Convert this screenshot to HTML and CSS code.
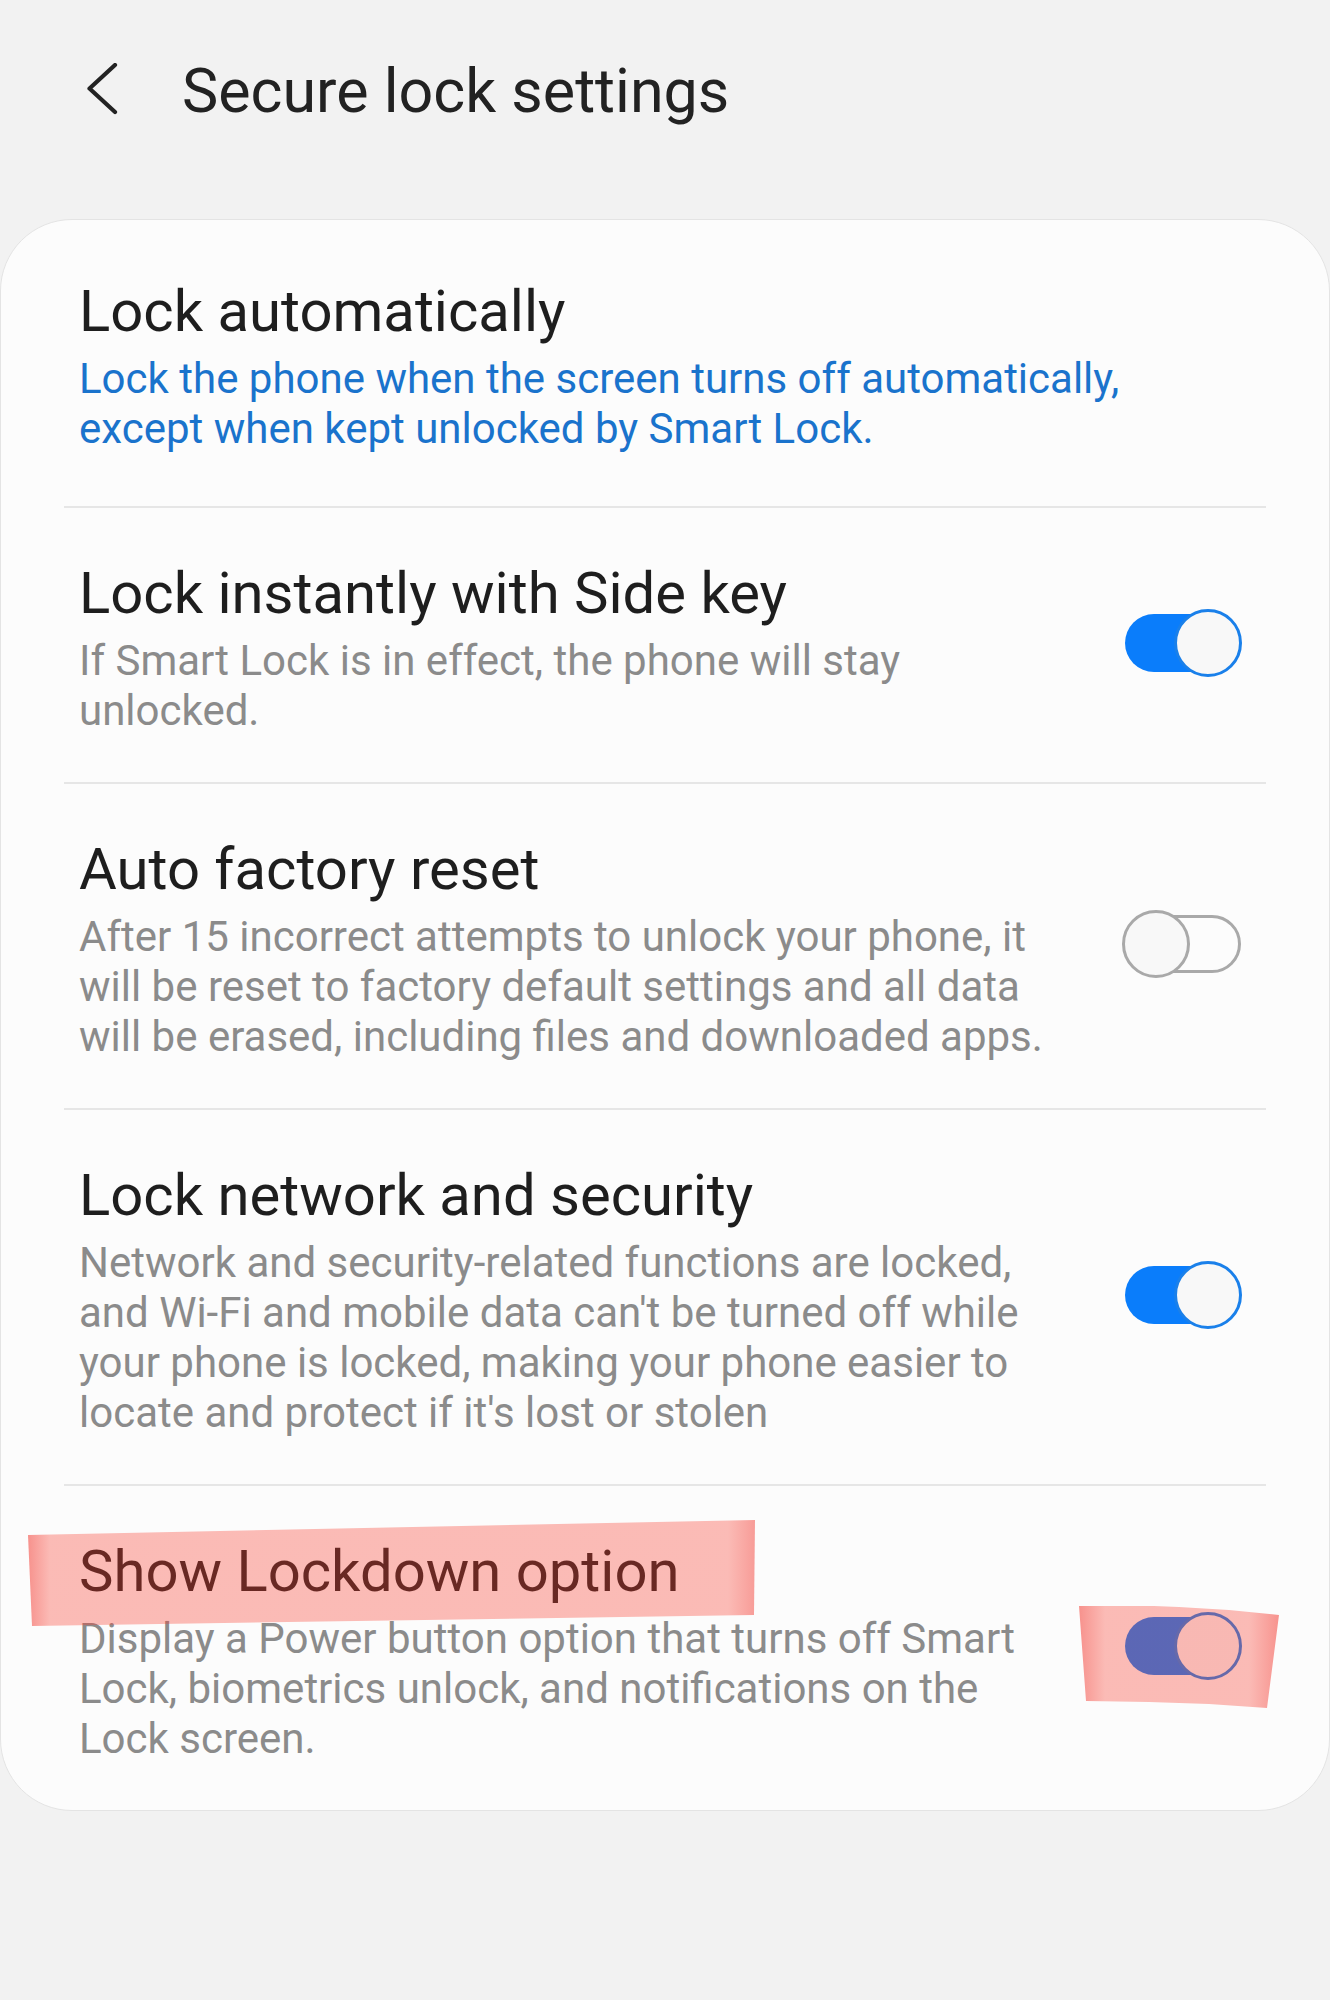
FILE: index.html
```html
<!DOCTYPE html>
<html lang="en">
<head>
<meta charset="utf-8">
<title>Secure lock settings</title>
<link rel="stylesheet" href="styles.css">
</head>
<body>
<div class="page">
  <header class="header">
    <svg class="back" viewBox="0 0 32 52" width="32" height="52" aria-hidden="true">
      <path d="M28 2 L2.5 25.5 L28 49" fill="none" stroke="#232323" stroke-width="4.2" stroke-linecap="round" stroke-linejoin="round"/>
    </svg>
    <h1 class="title">Secure lock settings</h1>
  </header>

  <section class="card">
    <div class="row row-first">
      <div class="text">
        <div class="item-title">Lock automatically</div>
        <div class="item-sub blue">Lock the phone when the screen turns off automatically, except when kept unlocked by Smart Lock.</div>
      </div>
    </div>
    <div class="divider"></div>
    <div class="row">
      <div class="text">
        <div class="item-title">Lock instantly with Side key</div>
        <div class="item-sub">If Smart Lock is in effect, the phone will stay unlocked.</div>
      </div>
      <div class="toggle on"><span class="track"></span><span class="knob"></span></div>
    </div>
    <div class="divider"></div>
    <div class="row">
      <div class="text">
        <div class="item-title">Auto factory reset</div>
        <div class="item-sub">After 15 incorrect attempts to unlock your phone, it will be reset to factory default settings and all data will be erased, including files and downloaded apps.</div>
      </div>
      <div class="toggle off"><span class="track"></span><span class="knob"></span></div>
    </div>
    <div class="divider"></div>
    <div class="row">
      <div class="text">
        <div class="item-title">Lock network and security</div>
        <div class="item-sub">Network and security-related functions are locked, and Wi-Fi and mobile data can't be turned off while your phone is locked, making your phone easier to locate and protect if it's lost or stolen</div>
      </div>
      <div class="toggle on"><span class="track"></span><span class="knob"></span></div>
    </div>
    <div class="divider"></div>
    <div class="row row-last">
      <div class="text">
        <div class="item-title">Show Lockdown option</div>
        <div class="item-sub">Display a Power button option that turns off Smart Lock, biometrics unlock, and notifications on the Lock screen.</div>
      </div>
      <div class="toggle on"><span class="track"></span><span class="knob"></span></div>
    </div>
  </section>

  <div class="mark mark-title"></div>
  <div class="mark mark-toggle"></div>
</div>
</body>
</html>
```

FILE: styles.css
```css
html, body {
  margin: 0;
  padding: 0;
  background: #f2f2f2;
}

body {
  font-family: Roboto, "Noto Sans", "Liberation Sans", sans-serif;
  color: #1e1e1e;
  min-height: 2000px;
}

.page {
  position: relative;
  width: 1330px;
  min-height: 2000px;
}

.header {
  display: flex;
  align-items: flex-start;
  padding: 55px 0 0 87px;
  height: 72px;
}

.back {
  display: block;
  margin-top: 8px;
  flex: none;
}

.title {
  margin: 0 0 0 63px;
  font-size: 61px;
  line-height: 72px;
  font-weight: 400;
  color: #222;
}

.card {
  margin: 92px 0 0 0;
  background: #fcfcfc;
  border: 1px solid #e4e4e4;
  border-radius: 72px;
  overflow: hidden;
}

.row {
  display: flex;
  align-items: center;
  gap: 62px;
  padding: 51px 85px 46px 78px;
}

.row-first {
  padding-top: 57px;
  padding-bottom: 52px;
}

.row-last {
  padding-bottom: 46px;
}

.text {
  flex: 1;
  min-width: 0;
}

.item-title {
  font-size: 58px;
  line-height: 68px;
  color: #1e1e1e;
}

.item-sub {
  margin-top: 9px;
  font-size: 42px;
  line-height: 50px;
  color: #8b8b8b;
}

.item-sub.blue {
  color: #1a73cc;
}

.divider {
  height: 2px;
  margin: 0 63px;
  background: #e6e6e6;
}

.toggle {
  position: relative;
  flex: none;
  width: 122px;
  height: 70px;
  margin-bottom: 10px;
}

.toggle .track {
  position: absolute;
  left: 3px;
  top: 6px;
  width: 116px;
  height: 58px;
  border-radius: 29px;
  box-sizing: border-box;
}

.toggle .knob {
  position: absolute;
  top: 1px;
  width: 68px;
  height: 68px;
  border-radius: 50%;
  box-sizing: border-box;
  background: #f8f8f8;
}

.toggle.on .track {
  background: #0a7dfb;
}

.toggle.on .knob {
  right: 2px;
  border: 3.5px solid #1a80ea;
}

.toggle.off .track {
  background: transparent;
  border: 3.5px solid #a9a9a9;
}

.toggle.off .knob {
  left: 0;
  border: 3.5px solid #a9a9a9;
}

.mark {
  position: absolute;
  pointer-events: none;
}

.mark-title {
  left: 28px;
  top: 1520px;
  width: 728px;
  height: 107px;
  background: linear-gradient(90deg, rgba(242, 40, 30, 0.5) 0px, rgba(249, 61, 46, 0.34) 22px, rgba(249, 61, 46, 0.34) 700px, rgba(242, 40, 30, 0.46) 728px);
  clip-path: polygon(0 15px, 727px 0, 726px 95px, 4px 106px);
}

.mark-toggle {
  left: 1079px;
  top: 1606px;
  width: 201px;
  height: 103px;
  background: linear-gradient(90deg, rgba(242, 40, 30, 0.5) 0px, rgba(249, 61, 46, 0.34) 26px, rgba(249, 61, 46, 0.34) 170px, rgba(242, 40, 30, 0.5) 201px);
  clip-path: polygon(0 0, 50px -1px, 100px 1px, 150px 4px, 200px 9px, 188px 102px, 130px 98px, 70px 96px, 7px 95px);
}
```
